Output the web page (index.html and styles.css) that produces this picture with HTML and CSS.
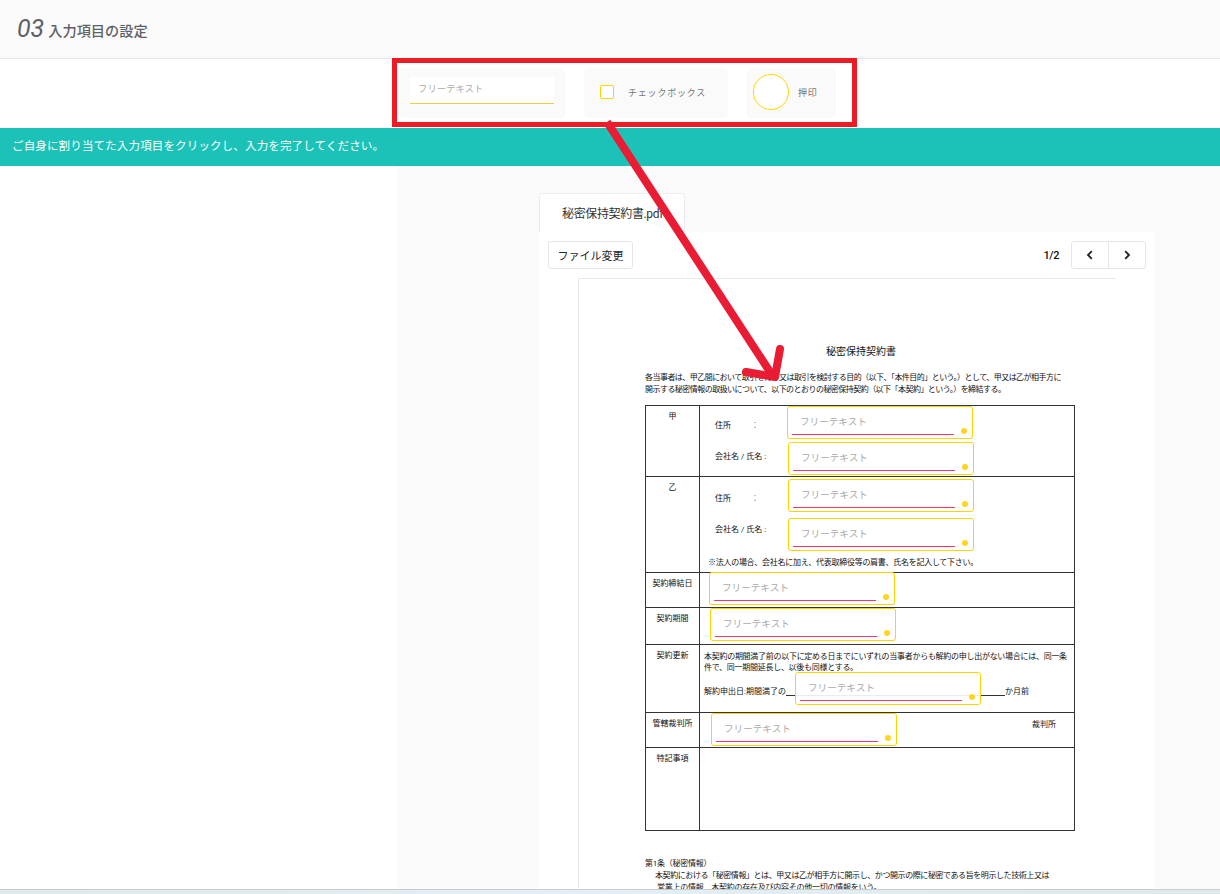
FILE: index.html
```html
<!DOCTYPE html>
<html>
<head>
    <meta charset="UTF-8">
    <title>入力項目の設定</title>
    <link rel="stylesheet" href="styles.css">
</head>
<body>
    <div class="header">
        <span class="step-no">03</span>
        <span class="step-title">入力項目の設定</span>
    </div>

    <div class="tools">
        <div class="tool tool-text">
            <div class="tool-input">フリーテキスト</div>
        </div>
        <div class="tool tool-check">
            <span class="check-box"></span>
            <span class="tool-label">チェックボックス</span>
        </div>
        <div class="tool tool-stamp">
            <span class="stamp-circle"></span>
            <span class="tool-label">押印</span>
        </div>
    </div>

    <div class="notice">ご自身に割り当てた入力項目をクリックし、入力を完了してください。</div>

    <div class="main">
        <div class="main-left"></div>
        <div class="main-right">
            <div class="tab">秘密保持契約書.pdf</div>
            <div class="panel">
                <div class="toolbar">
                    <button class="button">ファイル変更</button>
                    <div class="pager">
                        <span class="page-count">1/2</span>
                        <div class="pager-buttons">
                            <span class="pager-btn">
                                <svg width="10" height="10" viewBox="0 0 10 10"><path d="M6.8 1.2 L3 5 L6.8 8.8" fill="none" stroke="#222" stroke-width="1.8"/></svg>
                            </span>
                            <span class="pager-btn">
                                <svg width="10" height="10" viewBox="0 0 10 10"><path d="M3.2 1.2 L7 5 L3.2 8.8" fill="none" stroke="#222" stroke-width="1.8"/></svg>
                            </span>
                        </div>
                    </div>
                </div>

                <div class="page">
                    <h2 class="doc-title">秘密保持契約書</h2>
                    <p class="doc-text">各当事者は、甲乙間において取引を行う又は取引を検討する目的（以下、「本件目的」という。）として、甲又は乙が相手方に<br>開示する秘密情報の取扱いについて、以下のとおりの秘密保持契約（以下「本契約」という。）を締結する。</p>

                    <table class="doc-table">
                        <tr class="row-a">
                            <th>甲</th>
                            <td>
                                <div class="addr addr-1">住所<span class="colon">：</span></div>
                                <div class="addr addr-2">会社名 / 氏名 :</div>
                            </td>
                        </tr>
                        <tr class="row-b">
                            <th>乙</th>
                            <td>
                                <div class="addr addr-3">住所<span class="colon">：</span></div>
                                <div class="addr addr-4">会社名 / 氏名 :</div>
                                <div class="addr-note">※法人の場合、会社名に加え、代表取締役等の肩書、氏名を記入して下さい。</div>
                            </td>
                        </tr>
                        <tr class="row-c"><th>契約締結日</th><td></td></tr>
                        <tr class="row-d"><th>契約期間</th><td></td></tr>
                        <tr class="row-e">
                            <th>契約更新</th>
                            <td>
                                <div class="renew">本契約の期間満了前の以下に定める日までにいずれの当事者からも解約の申し出がない場合には、同一条件で、同一期間延長し、以後も同様とする。</div>
                                <div class="renew-line">解約申出日:期間満了の<span class="blank"></span>か月前</div>
                            </td>
                        </tr>
                        <tr class="row-f"><th>管轄裁判所</th><td><span class="court">裁判所</span></td></tr>
                        <tr class="row-g"><th>特記事項</th><td></td></tr>
                    </table>

                    <div class="clause">
                        <div>第1条（秘密情報）</div>
                        <div class="clause-1">本契約における「秘密情報」とは、甲又は乙が相手方に開示し、かつ開示の際に秘密である旨を明示した技術上又は</div>
                        <div class="clause-2">営業上の情報、本契約の存在及び内容その他一切の情報をいう。</div>
                    </div>

                    <!-- 入力項目 -->
                    <div class="field f1"><span>フリーテキスト</span><i></i></div>
                    <div class="field f2"><span>フリーテキスト</span><i></i></div>
                    <div class="field f3"><span>フリーテキスト</span><i></i></div>
                    <div class="field f4"><span>フリーテキスト</span><i></i></div>
                    <div class="field f5"><span>フリーテキスト</span><i></i></div>
                    <div class="field f6"><span>フリーテキスト</span><i></i></div>
                    <div class="field f7"><span>フリーテキスト</span><i></i></div>
                    <div class="field f8"><span>フリーテキスト</span><i></i></div>
                </div>
            </div>
        </div>
    </div>
    <div class="bottom-strip"></div>

    <!-- 注釈 -->
    <div class="callout"></div>
    <svg class="arrow" width="1220" height="894" viewBox="0 0 1220 894">
        <path d="M607 122 L772 375" fill="none" stroke="#e91c34" stroke-width="8"/>
        <path d="M746 372 L775 377 L780 349" fill="none" stroke="#e91c34" stroke-width="8" stroke-linecap="round" stroke-linejoin="round"/>
    </svg>
</body>
</html>
```

FILE: styles.css
```css
html, body {
    margin: 0;
    padding: 0;
}
body {
    position: relative;
    width: 1220px;
    height: 894px;
    overflow: hidden;
    display: flex;
    flex-direction: column;
    background-color: #fff;
    font-family: "Roboto", "Noto Sans CJK JP", sans-serif;
    color: #222;
}

/* header */
.header {
    flex: none;
    display: flex;
    align-items: center;
    gap: 4px;
    padding-left: 17px;
    padding-bottom: 2px;
    box-sizing: border-box;
    height: 59px;
    background-color: #fafafa;
    border-bottom: 1px solid #e8e8e8;
    color: #5f5f66;
}
.step-no {
    font-size: 25px;
    font-style: italic;
    font-weight: 400;
}
.step-title {
    font-size: 14.2px;
    font-weight: 500;
    padding-top: 3px;
}

/* tools */
.tools {
    height: 69px;
    flex: none;
    box-sizing: border-box;
    display: flex;
    gap: 18px;
    padding: 9px 0 0 397px;
}
.tool {
    height: 50px;
    box-sizing: border-box;
    padding-bottom: 2px;
    display: flex;
    align-items: center;
    background-color: #fafafa;
    border-radius: 5px;
}
.tool-text {
    width: 169px;
    padding-left: 13px;
    padding-bottom: 5px;
}
.tool-input {
    width: 144px;
    height: 27px;
    box-sizing: border-box;
    padding: 4px 0 0 8px;
    background-color: #fff;
    border-bottom: 1px solid #f0cf3c;
    font-size: 9.4px;
    line-height: 16px;
    color: #aaa;
}
.tool-check {
    width: 144px;
    padding-left: 16px;
    gap: 14px;
}
.check-box {
    width: 14px;
    height: 14px;
    box-sizing: border-box;
    border: 1px solid #ffd400;
    border-radius: 2px;
    background-color: #fff;
}
.tool-stamp {
    width: 90px;
    padding-left: 7px;
    gap: 9px;
}
.stamp-circle {
    width: 36px;
    height: 36px;
    box-sizing: border-box;
    border: 1px solid #ffd400;
    border-radius: 50%;
    background-color: #fff;
}
.tool-label {
    font-size: 9px;
    letter-spacing: 0.8px;
    color: #777;
}

/* notice */
.notice {
    height: 38px;
    flex: none;
    padding-left: 12px;
    background-color: #1cc2b7;
    color: #fff;
    font-size: 11.5px;
    letter-spacing: 0.15px;
    line-height: 36px;
}

/* main */
.main {
    flex: 1;
    min-height: 0;
    display: flex;
}
.main-left {
    width: 397px;
    flex: none;
}
.main-right {
    flex: 1;
    background-color: #fafafa;
    padding: 27px 0 0 142px;
    overflow: hidden;
}
.tab {
    width: 146px;
    height: 39px;
    box-sizing: border-box;
    background-color: #fff;
    border: 1px solid #eee;
    border-bottom: none;
    border-radius: 3px 3px 0 0;
    padding-left: 22px;
    font-size: 12px;
    letter-spacing: -0.35px;
    line-height: 40px;
    color: #333;
}
.panel {
    width: 616px;
    height: 700px;
    background-color: #fff;
}
.toolbar {
    height: 46px;
    box-sizing: border-box;
    display: flex;
    justify-content: space-between;
    align-items: flex-start;
    padding: 9px 9px 0;
}
.button {
    width: 85px;
    height: 28px;
    padding: 0;
    background-color: #fff;
    border: 1px solid #e6e6e6;
    border-radius: 3px;
    font-family: inherit;
    font-size: 11px;
    color: #222;
}
.pager {
    display: flex;
    align-items: center;
    gap: 12px;
}
.page-count {
    font-size: 11px;
    font-weight: 500;
    letter-spacing: -0.4px;
    color: #111;
}
.pager-buttons {
    display: flex;
    height: 28px;
    box-sizing: border-box;
    border: 1px solid #e6e6e6;
    border-radius: 3px;
}
.pager-btn {
    width: 36px;
    display: flex;
    align-items: center;
    justify-content: center;
}
.pager-btn + .pager-btn {
    border-left: 1px solid #e6e6e6;
}

/* pdf page */
.page {
    position: relative;
    width: 538px;
    height: 640px;
    box-sizing: border-box;
    margin-left: 39px;
    padding: 0 0 0 66px;
    background-color: #fff;
    border-top: 1px solid #e8e8e8;
    border-left: 1px solid #e8e8e8;
    font-size: 8px;
    color: #111;
}
.doc-title {
    margin: 0;
    padding: 66px 0 0 181px;
    font-size: 10px;
    font-weight: 400;
    line-height: 14px;
}
.doc-text {
    margin: 13px 0 0;
    width: 440px;
    line-height: 12px;
    letter-spacing: -0.54px;
}
.doc-table {
    margin-top: 9px;
    width: 430px;
    height: 426px;
    table-layout: fixed;
    border-collapse: collapse;
    font-size: 8px;
}
.doc-table th,
.doc-table td {
    border: 1px solid #333;
    vertical-align: top;
    padding: 0;
}
.doc-table th {
    width: 53px;
    padding-top: 5px;
    font-weight: 400;
    line-height: 11px;
}
.row-a { height: 71px; }
.row-b { height: 96px; }
.row-c { height: 35px; }
.row-d { height: 37px; }
.row-e { height: 68px; }
.row-f { height: 35px; }
.row-g { height: 83px; }
.addr {
    padding-left: 15px;
    line-height: 11px;
    height: 11px;
}
.colon {
    margin-left: 20px;
    color: #888;
}
.addr-1 { margin-top: 14px; }
.addr-2 { margin-top: 20px; }
.addr-3 { margin-top: 16px; }
.addr-4 { margin-top: 20px; }
.addr-note {
    margin-top: 22px;
    padding-left: 8px;
    line-height: 12px;
    letter-spacing: -0.28px;
}
.renew {
    padding: 6px 2px 0 4px;
    line-height: 11px;
    letter-spacing: -0.28px;
}
.renew-line {
    margin-top: 13px;
    padding-left: 4px;
    line-height: 11px;
}
.blank {
    display: inline-block;
    width: 219px;
    height: 9px;
    border-bottom: 1px solid #333;
    vertical-align: -2px;
}
.court {
    display: block;
    margin: 6px 0 0 332px;
    line-height: 11px;
}
.clause {
    margin-top: 27px;
    line-height: 12px;
    letter-spacing: -0.25px;
}
.clause-1 {
    padding-left: 10px;
    letter-spacing: -0.42px;
}
.clause-2 {
    padding-left: 12px;
}

/* input fields on the page */
.field {
    position: absolute;
    width: 186px;
    height: 33px;
    box-sizing: border-box;
    padding: 7px 0 0 12px;
    background-color: rgba(255, 255, 255, 0.9);
    border: 1px solid #ffd400;
    border-radius: 3px;
    font-size: 9.6px;
    line-height: 16px;
    color: #aaa;
}
.field::before {
    content: "";
    position: absolute;
    left: 4px;
    bottom: 3px;
    width: 162px;
    border-bottom: 1px solid #f0386b;
}
.field i {
    position: absolute;
    right: 5px;
    bottom: 4px;
    width: 6px;
    height: 6px;
    border-radius: 50%;
    background-color: #ffd51f;
}
.f1 { left: 208px; top: 127px; }
.f2 { left: 209px; top: 163px; }
.f3 { left: 209px; top: 200px; }
.f4 { left: 209px; top: 239px; }
.f5 { left: 130px; top: 293px; }
.f6 { left: 131px; top: 329px; }
.f7 { left: 216px; top: 393px; }
.f8 { left: 132px; top: 434px; }

.bottom-strip {
    height: 5px;
    background: linear-gradient(to right, #dfe9ee, #e3eff4 50%, #dfe8ec);
    border-top: 1px solid #c9cdd0;
    position: absolute;
    left: 0;
    right: 0;
    bottom: 0;
    box-sizing: border-box;
}

/* annotation */
.callout {
    position: absolute;
    left: 392px;
    top: 58px;
    width: 465px;
    height: 69px;
    box-sizing: border-box;
    border: 5px solid #ed1c24;
}
.arrow {
    position: absolute;
    left: 0;
    top: 0;
}
```
